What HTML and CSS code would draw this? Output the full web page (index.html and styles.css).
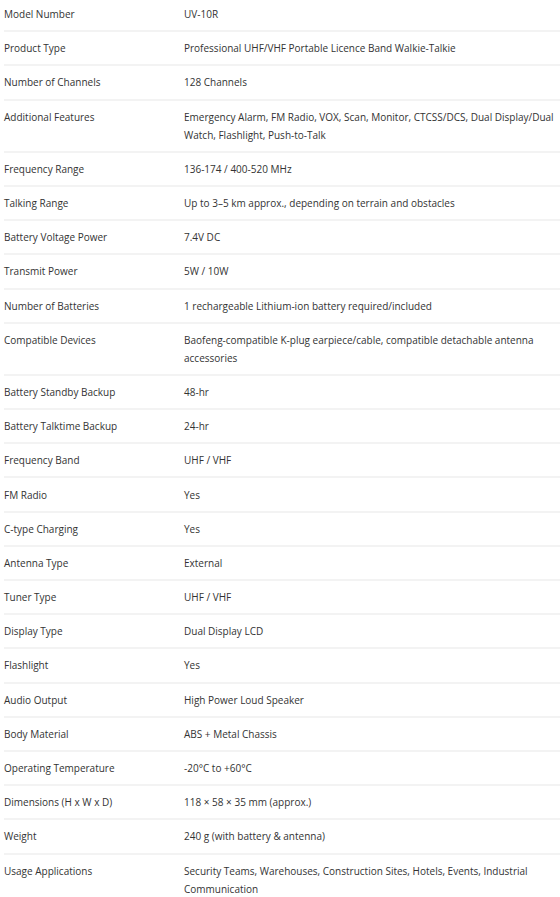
FILE: index.html
```html
<!DOCTYPE html>
<html lang="en">
<head>
    <meta charset="UTF-8">
    <meta name="viewport" content="width=device-width, initial-scale=1.0">
    <title>UV-10R Specifications</title>
    <link rel="stylesheet" href="styles.css">
</head>
<body>
    <table class="specs">
        <tbody>
            <tr><td>Model Number</td><td>UV-10R</td></tr>
            <tr><td>Product Type</td><td>Professional UHF/VHF Portable Licence Band Walkie-Talkie</td></tr>
            <tr><td>Number of Channels</td><td>128 Channels</td></tr>
            <tr><td>Additional Features</td><td>Emergency Alarm, FM Radio, VOX, Scan, Monitor, CTCSS/DCS, Dual Display/Dual Watch, Flashlight, Push-to-Talk</td></tr>
            <tr><td>Frequency Range</td><td>136-174 / 400-520 MHz</td></tr>
            <tr><td>Talking Range</td><td>Up to 3–5 km approx., depending on terrain and obstacles</td></tr>
            <tr><td>Battery Voltage Power</td><td>7.4V DC</td></tr>
            <tr><td>Transmit Power</td><td>5W / 10W</td></tr>
            <tr><td>Number of Batteries</td><td>1 rechargeable Lithium-ion battery required/included</td></tr>
            <tr><td>Compatible Devices</td><td>Baofeng-compatible K-plug earpiece/cable, compatible detachable antenna accessories</td></tr>
            <tr><td>Battery Standby Backup</td><td>48-hr</td></tr>
            <tr><td>Battery Talktime Backup</td><td>24-hr</td></tr>
            <tr><td>Frequency Band</td><td>UHF / VHF</td></tr>
            <tr><td>FM Radio</td><td>Yes</td></tr>
            <tr><td>C-type Charging</td><td>Yes</td></tr>
            <tr><td>Antenna Type</td><td>External</td></tr>
            <tr><td>Tuner Type</td><td>UHF / VHF</td></tr>
            <tr><td>Display Type</td><td>Dual Display LCD</td></tr>
            <tr><td>Flashlight</td><td>Yes</td></tr>
            <tr><td>Audio Output</td><td>High Power Loud Speaker</td></tr>
            <tr><td>Body Material</td><td>ABS + Metal Chassis</td></tr>
            <tr><td>Operating Temperature</td><td>-20°C to +60°C</td></tr>
            <tr><td>Dimensions (H x W x D)</td><td>118 × 58 × 35 mm (approx.)</td></tr>
            <tr><td>Weight</td><td>240 g (with battery &amp; antenna)</td></tr>
            <tr><td>Usage Applications</td><td>Security Teams, Warehouses, Construction Sites, Hotels, Events, Industrial Communication</td></tr>
        </tbody>
    </table>
</body>
</html>
```

FILE: styles.css
```css
/* Base styling */
body {
    font-family: 'Open Sans', 'Noto Sans', sans-serif;
    background-color: #fff;
    color: #333;
    margin: 0;
    padding: 0;
    overflow: hidden;
}

.specs {
    width: 556px;
    margin: -2px 0 0 4px;
    border-collapse: collapse;
    font-size: 10px;
    line-height: 18px;
}

.specs td {
    padding: 7.1px 0;
    vertical-align: top;
    text-align: left;
}

.specs td:first-child {
    width: 180px;
}

.specs td:last-child {
    padding-right: 4px;
}

.specs tr + tr td {
    border-top: 2px solid #f3f3f3;
}
```
